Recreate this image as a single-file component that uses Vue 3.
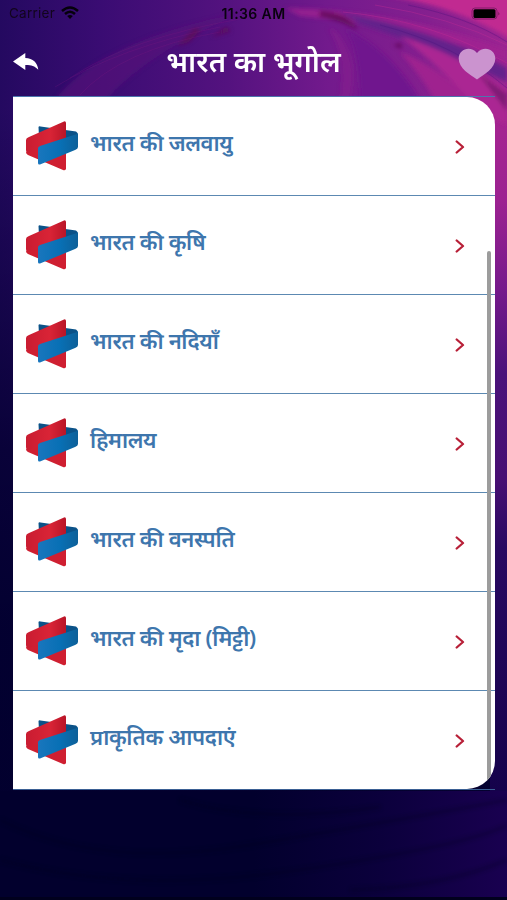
<script setup>
const topics = ['भारत की जलवायु', 'भारत की कृषि', 'भारत की नदियाँ', 'हिमालय', 'भारत की वनस्पति', 'भारत की मृदा (मिट्टी)', 'प्राकृतिक आपदाएं']
</script>

<template>
  <main class="screen">
    <svg class="backdrop" viewBox="0 0 507 900" preserveAspectRatio="none" aria-hidden="true">
      <defs>
        <linearGradient id="side" x1="0" y1="0" x2="1" y2="0">
          <stop offset="0" stop-color="#240960" /><stop offset=".2" stop-color="#3a0c73" />
          <stop offset=".45" stop-color="#54127f" /><stop offset=".65" stop-color="#731a8d" /><stop offset=".85" stop-color="#85208f" /><stop offset="1" stop-color="#9c2592" />
        </linearGradient>
        <linearGradient id="shade" x1="0" y1="0" x2="0" y2="1">
          <stop offset="0" stop-color="#02002f" stop-opacity="0" /><stop offset=".12" stop-color="#02002f" stop-opacity="0" />
          <stop offset=".5" stop-color="#02002f" stop-opacity=".8" /><stop offset=".7" stop-color="#02002f" stop-opacity=".97" />
          <stop offset="1" stop-color="#02002d" />
        </linearGradient>
        <linearGradient id="edge" x1="0" y1="97" x2="0" y2="790" gradientUnits="userSpaceOnUse">
          <stop offset="0" stop-color="#a72591" /><stop offset=".15" stop-color="#9c2291" /><stop offset=".28" stop-color="#75198b" />
          <stop offset=".4" stop-color="#4a127a" /><stop offset=".55" stop-color="#480f73" /><stop offset=".65" stop-color="#290961" /><stop offset="1" stop-color="#15024b" />
        </linearGradient>
        <linearGradient id="floor" x1="0" y1="0" x2="1" y2="0">
          <stop offset=".5" stop-color="#02002d" /><stop offset=".75" stop-color="#0b003c" /><stop offset="1" stop-color="#190050" />
        </linearGradient>
        <filter id="soft" x="-20%" y="-20%" width="140%" height="140%"><feGaussianBlur stdDeviation="2.2" /></filter>
      </defs>
      <rect width="507" height="900" fill="url(#side)" />
      <rect width="507" height="900" fill="url(#shade)" />
      <rect x="490" y="97" width="17" height="694" fill="url(#edge)" />
      <g filter="url(#soft)">
        <path d="M365 -6C420 -2 465 12 520 44V-6Z" fill="#c12a91" />
        <path d="M285 8Q400 10 507 50L507 60Q420 27 300 16Z" fill="#a22391" opacity=".75" />
        <path d="M340 12Q430 28 507 68V82Q425 45 360 24Z" fill="#64208b" />
        <path d="M400 36Q455 52 507 90V125L480 112Q440 65 400 36Z" fill="#ab2893" />
        <path d="M400 52Q440 67 471 100H435Q420 74 400 52Z" fill="#9f248f" />
        <path d="M345 28Q390 50 420 100H360Q360 50 345 28Z" fill="#6f198e" />
        <path d="M55 100Q100 40 245 12Q155 47 105 100Z" fill="#591379" opacity=".6" />
        <path d="M335 30Q360 58 350 100H340Q347 55 328 28Z" fill="#87208e" opacity=".6" />
        <path d="M177 46L195 28L201 30L189 42ZM211 37L226 27L231 31ZM320 11Q350 13 358 30Q340 20 319 16ZM393 45L401 43L402 49Z" fill="#5d0b55" opacity=".85" />
        <path d="M477 72L507 94V111Z" fill="#651564" opacity=".65" />
      </g>
      <g fill="none" stroke-width="1" opacity=".6">
        <path d="M343 12Q430 20 507 63M375 5Q450 17 507 45M420 0Q465 10 507 33" stroke="#c12c96" opacity=".65" />
        <path d="M380 25Q455 44 507 88M408 5Q470 18 507 42" stroke="#4c137d" opacity=".6" />
        <path d="M70 78Q130 38 240 19M55 87Q120 47 220 27M80 95Q120 50 220 32" stroke="#841b84" opacity=".4" />
      </g>
      <rect y="791" width="507" height="109" fill="url(#floor)" />
      <g fill="none" stroke="#00001c" stroke-width="3" opacity=".35" filter="url(#soft)">
        <path d="M0 820Q100 870 250 845T507 800M0 860Q130 895 300 870T507 825M180 800Q260 825 380 807M350 890Q440 888 507 860" />
      </g>
      <rect y="897" width="507" height="3" fill="#01001d" />
    </svg>

    <div class="status">
      <div class="carrier"><span>Carrier</span>
        <svg width="18" height="14" viewBox="0 0 18 14" fill="none" stroke="currentColor" stroke-width="2.5">
          <path d="M1 5Q9-2 17 5M4 8Q9 3.5 14 8" /><path d="M6.2 10Q9 7.8 11.8 10L9 13Z" fill="currentColor" stroke="none" />
        </svg>
      </div>
      <time>11:36 AM</time>
      <div class="battery"><svg width="30" height="14" viewBox="0 0 30 14">
        <rect x="1" y="1" width="25" height="11" rx="3" fill="none" stroke="#4a0d45" stroke-opacity=".5" />
        <rect x="2.5" y="2.2" width="22" height="8.7" rx="1.5" /><path d="M27.5 4.5Q29 6.5 27.5 8.5Z" opacity=".5" />
      </svg></div>
    </div>

    <header>
      <svg class="back" width="26" height="18" viewBox="0 0 26 18" fill="#fff"><path d="M0 8.6L12.3 0V4.9C20 5.2 24.5 9.3 25.3 16.7C21.5 12.9 18 11.9 12.3 12V17Z" /></svg>
      <h1>भारत का भूगोल</h1>
      <svg class="heart" width="38" height="32" viewBox="0 0 38 32"><path d="M19 31.5C12 26.5 .7 20.5 .7 10.5C.7 1 12.5-3 19 5C25.5-3 37.3 1 37.3 10.5C37.3 20.5 26 26.5 19 31.5Z" fill="#cb93cf" /></svg>
    </header>

    <div class="panel">
      <div class="sheet">
        <ul>
          <li v-for="topic in topics" :key="topic">
            <svg class="ribbon" width="52" height="50" viewBox="0 0 52 50">
              <defs>
                <linearGradient id="red" x1="0" y1="0" x2="1" y2="0"><stop stop-color="#c91c31" /><stop offset=".6" stop-color="#d92436" /><stop offset="1" stop-color="#b91528" /></linearGradient>
                <linearGradient id="blue" x1="0" y1="0" x2="1" y2="0"><stop stop-color="#1976bd" /><stop offset=".55" stop-color="#0870b5" /><stop offset="1" stop-color="#0d6099" /></linearGradient>
              </defs>
              <path d="M12.5 6Q13 5 14.5 5.5L50 10.5Q52 11.5 51 15L36 20L13 16Z" fill="#0b5288" />
              <path d="M0 31L13 25L40 32V48Q39 50 37 49L2 34Q0 33 0 31Z" fill="#cf1f31" />
              <path d="M0 19Q0 17 3 16L38 .4Q40 0 40 2V18L12 29L3 32Q0 32 0 29Z" fill="url(#red)" />
              <path d="M12 27Q12 26 14 25L48 14Q52 13 52 11V26Q52 28 49 29L14 43.5Q12 44 12 42Z" fill="url(#blue)" />
            </svg>
            <span>{{ topic }}</span>
            <svg class="chevron" width="10" height="14" viewBox="0 0 10 14" fill="none" stroke="#b82038" stroke-width="2.3" stroke-linecap="round" stroke-linejoin="round"><path d="M1.7 1.5L8 7L1.7 12.5" /></svg>
          </li>
        </ul>
        <i class="scrollbar"></i>
      </div>
    </div>
  </main>
</template>

<style>
body { margin: 0; }
</style>
<style scoped>
.screen { position: relative; width: 507px; height: 900px; overflow: hidden; display: flex; flex-direction: column; font-family: "Noto Sans", "Noto Sans Devanagari", sans-serif; background: #03002f; }
.backdrop { position: absolute; inset: 0; width: 100%; height: 100%; }
.status, header, .panel, .sheet { position: relative; }
.status { display: grid; grid-template-columns: 1fr auto 1fr; align-items: center; height: 27px; padding: 0 6px 0 9px; box-sizing: border-box; font: 13.5px/27px Inter, sans-serif; color: #09020f; }
.carrier { display: flex; align-items: center; gap: 6px; color: #12051d; letter-spacing: .25px; }
.carrier svg { color: #05010b; margin-bottom: 1px; }
time { font-weight: 600; font-size: 14px; letter-spacing: .4px; margin-left: -3px; }
.battery { display: flex; justify-content: flex-end; }
header { display: grid; grid-template-columns: 40px 1fr 40px; align-items: center; height: 69px; padding: 0 11px 0 13px; box-sizing: border-box; }
h1 { margin: 0 2px 2px 0; color: #fff; font-size: 29px; line-height: 67px; font-weight: 600; text-align: center; white-space: nowrap; }
.back { margin-top: 1px; }
.heart { justify-self: end; margin: 5px 0 0; }
.panel { width: 482px; height: 694px; margin-left: 13px; border-top: 1px solid #4c76ae; border-bottom: 1px solid #3b6094; box-sizing: border-box; }
.sheet { height: 692px; background: #fff; border-radius: 0 28px 28px 0; overflow: hidden; }
ul { margin: 0; padding: 0; list-style: none; }
li { display: flex; align-items: center; height: 99px; box-sizing: border-box; padding: 0 30px 0 13px; border-bottom: 1px solid #5c89b2; color: #3e76ad; font-size: 22px; font-weight: 600; }
li:last-child { height: 98px; border: 0; }
li span { flex: 1; margin-left: 12px; padding-bottom: 8px; white-space: nowrap; letter-spacing: -.35px; }
.chevron { margin-top: 2px; }
.scrollbar { position: absolute; right: 4px; top: 154px; width: 4px; bottom: 3px; background: #9c9c9c; border-radius: 2px; }
</style>
